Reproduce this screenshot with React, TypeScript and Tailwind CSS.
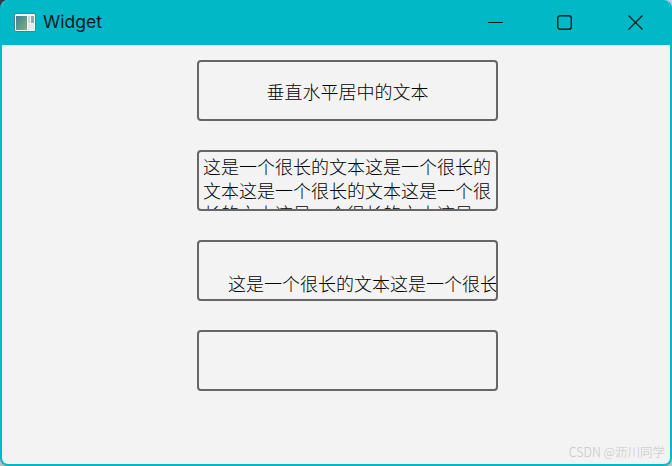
const cjk = 'font-["Noto_Sans_CJK_SC","Liberation_Sans",sans-serif]';
const boxClass = 'h-[61px] w-[301px] shrink-0 overflow-hidden rounded-[4px] border-2 border-[#666666] text-[18px] font-light text-black';

const longText = '这是一个很长的文本这是一个很长的文本这是一个很长的文本这是一个很长的文本这是一个很长的文本这是';

function WindowIcon() {
  return (
    <svg width="22" height="19" viewBox="0 0 22 19" className="shrink-0">
      <defs>
        <linearGradient id="thumb" x1="0" y1="0" x2="1" y2="1">
          <stop offset="0" stopColor="#3f7f9c" />
          <stop offset="1" stopColor="#7fb07a" />
        </linearGradient>
      </defs>
      <rect x="0.5" y="0.5" width="21" height="18" rx="1.5" fill="#f1f4f4" stroke="#4f7f88" />
      <rect x="2" y="3" width="11" height="14" fill="url(#thumb)" />
      <rect x="14" y="3" width="2" height="7" fill="#c9d6d6" />
      <rect x="17" y="3" width="3" height="7" fill="#8fa8a8" />
      <rect x="14" y="11" width="6" height="6" fill="#e4e9e9" />
    </svg>
  );
}

function TitleBar() {
  return (
    <div className="flex h-[45px] shrink-0 items-center bg-[#00b8c6] pl-[14px]">
      <WindowIcon />
      <span className='ml-[7px] font-["Inter",sans-serif] text-[17.5px] text-[#0a1a1e]'>Widget</span>
      <div className="ml-auto flex items-center">
        <svg width="15" height="15" viewBox="0 0 15 15" className="mr-[54px]">
          <path d="M0 7.5H15" stroke="#0a1a1e" strokeWidth="1" />
        </svg>
        <svg width="15" height="15" viewBox="0 0 15 15" className="mr-[56px]">
          <rect x="0.7" y="0.7" width="13.6" height="13.6" rx="2.5" fill="none" stroke="#0a1a1e" strokeWidth="1.4" />
        </svg>
        <svg width="15" height="15" viewBox="0 0 15 15" className="mr-[29px]">
          <path d="M0.5 0.5L14.5 14.5M14.5 0.5L0.5 14.5" stroke="#0a1a1e" strokeWidth="1.2" />
        </svg>
      </div>
    </div>
  );
}

export default function App() {
  return (
    <div className={`relative h-[466px] w-[672px] overflow-hidden bg-[#bdbdbd] ${cjk}`}>
      <div className="absolute left-0 top-0 size-[12px] bg-[#2f3a4a]" />
      <div className="absolute right-0 top-0 size-[12px] bg-[#c0cfe8]" />
      <div className="relative flex h-full flex-col overflow-hidden rounded-[8px] border-2 border-t-0 border-[#00b8c6] bg-[#f3f3f3]">
        <div className="-mx-[2px]">
          <TitleBar />
        </div>
        <div className="flex flex-col gap-[29px] pl-[195px] pt-[15px]">
          <div className={`${boxClass} flex items-center justify-center pt-[2px]`}>垂直水平居中的文本</div>
          <div className={`${boxClass} px-[4px] pt-[3px] leading-[23.5px]`}>{longText}</div>
          <div className={`${boxClass} flex items-end pb-[4px] pl-[29px] leading-[24px] whitespace-nowrap`}>{longText.slice(0, 18)}</div>
          <div className={boxClass} />
        </div>
      </div>
      <span className="absolute bottom-[7px] right-[7px] text-[12.5px] leading-[14px] font-light text-[#c4c4c4]">CSDN @沥川同学</span>
    </div>
  );
}
